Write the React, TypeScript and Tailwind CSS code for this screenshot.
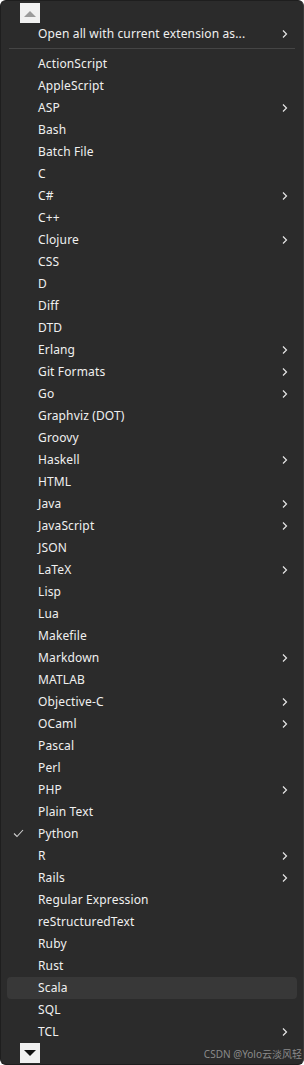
import React from "react";

const items: [string, boolean][] = [
  ["ActionScript", false],
  ["AppleScript", false],
  ["ASP", true],
  ["Bash", false],
  ["Batch File", false],
  ["C", false],
  ["C#", true],
  ["C++", false],
  ["Clojure", true],
  ["CSS", false],
  ["D", false],
  ["Diff", false],
  ["DTD", false],
  ["Erlang", true],
  ["Git Formats", true],
  ["Go", true],
  ["Graphviz (DOT)", false],
  ["Groovy", false],
  ["Haskell", true],
  ["HTML", false],
  ["Java", true],
  ["JavaScript", true],
  ["JSON", false],
  ["LaTeX", true],
  ["Lisp", false],
  ["Lua", false],
  ["Makefile", false],
  ["Markdown", true],
  ["MATLAB", false],
  ["Objective-C", true],
  ["OCaml", true],
  ["Pascal", false],
  ["Perl", false],
  ["PHP", true],
  ["Plain Text", false],
  ["Python", false],
  ["R", true],
  ["Rails", true],
  ["Regular Expression", false],
  ["reStructuredText", false],
  ["Ruby", false],
  ["Rust", false],
  ["Scala", false],
  ["SQL", false],
  ["TCL", true],
];

function Chevron() {
  return (
    <svg width="8" height="10" viewBox="0 0 8 10" className="block">
      <path d="M2 1.5 L5.5 5 L2 8.5" stroke="#e6e6e6" strokeWidth="1.2" fill="none" />
    </svg>
  );
}

function Check() {
  return (
    <svg width="11" height="9" viewBox="0 0 11 9" className="block">
      <path d="M1 4.5 L4 7.5 L10 1" stroke="#cfcfcf" strokeWidth="1.1" fill="none" />
    </svg>
  );
}

function Row({ label, sub, checked, hover }: { label: string; sub?: boolean; checked?: boolean; hover?: boolean }) {
  return (
    <div
      className={`h-[22px] mx-[6px] flex items-center rounded-[4px] ${hover ? "bg-[#383838]" : ""}`}
    >
      <div className="w-[31px] flex justify-start pl-[6px]">{checked ? <Check /> : null}</div>
      <div className="flex-1 text-[12px] tracking-[0.14px] text-[#f0f0f0] leading-[22px]">{label}</div>
      <div className="w-[16px] flex">{sub ? <Chevron /> : null}</div>
    </div>
  );
}

export default function App() {
  return (
    <div
      className="w-[304px] h-[1065px] bg-[#2b2b2b] border border-[#1e1e1e] border-r-[#3a3a3a] rounded-[6px] relative overflow-hidden flex flex-col"
      style={{ fontFamily: '"Noto Sans", "Open Sans", sans-serif' }}
    >
      <div className="h-[22px] pt-[2px] pl-[19px]">
        <div className="w-[20px] h-[20px] bg-[#f0f0f0] flex items-center justify-center">
          <svg width="12" height="7" viewBox="0 0 12 7">
            <path d="M0 7 L6 1 L12 7 Z" fill="#9a9a9a" />
          </svg>
        </div>
      </div>
      <Row label="Open all with current extension as..." sub />
      <div className="h-[8px] flex items-center px-[8px]">
        <div className="h-[1px] w-full bg-[#454545]"></div>
      </div>
      {items.map(([l, s]) => (
        <Row key={l} label={l} sub={s} checked={l === "Python"} hover={l === "Scala"} />
      ))}
      <div className="h-[22px] pl-[19px] flex items-center justify-between pr-[1px]">
        <div className="w-[20px] h-[20px] bg-[#f0f0f0] flex items-center justify-center">
          <svg width="12" height="7" viewBox="0 0 12 7">
            <path d="M0 0 L12 0 L6 6 Z" fill="#111" />
          </svg>
        </div>
        <div
          className="text-[10px] text-[#8a8a8a] leading-none pt-[2px]"
          style={{ fontFamily: '"Noto Sans", "Noto Sans CJK SC", sans-serif' }}
        >
          CSDN @Yolo云淡风轻
        </div>
      </div>
    </div>
  );
}
